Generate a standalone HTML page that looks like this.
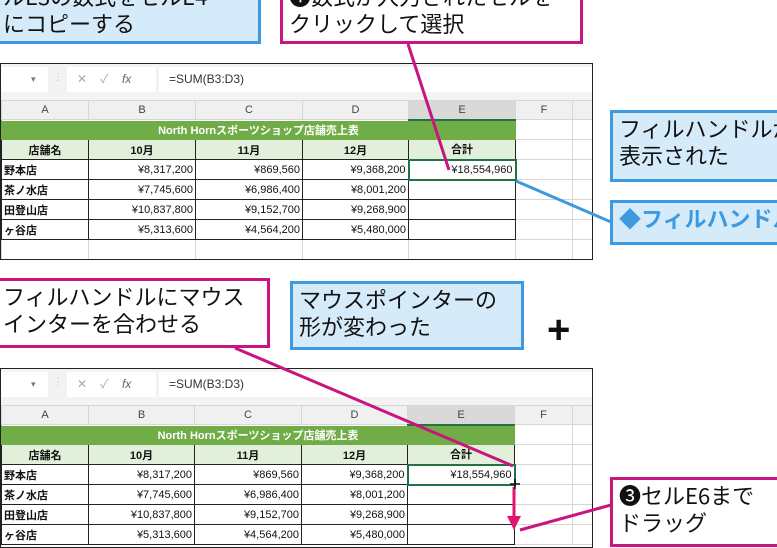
<!DOCTYPE html>
<html><head><meta charset="utf-8"><style>
*{margin:0;padding:0;box-sizing:border-box}
body{width:777px;height:534px;background:#fff;position:relative;overflow:hidden;font-family:"Liberation Sans","Noto Sans CJK JP",sans-serif}
.cb{position:absolute;border:3px solid #3d9ae0;background:#d6ebfa;font-size:22px;line-height:27px;color:#111;padding:2px 6px;white-space:nowrap;overflow:hidden;font-family:"Noto Sans CJK JP",sans-serif}
.cm{position:absolute;border:3px solid #c8157f;background:#fff;font-size:22px;line-height:27px;color:#111;padding:2px 6px;white-space:nowrap;overflow:hidden;font-family:"Noto Sans CJK JP",sans-serif}
.xl{position:absolute;left:0;width:593px;border:1px solid #222;background:#fff;overflow:hidden}
.fb{height:36px;background:#f3f3f3;position:relative}
.fb .nb{position:absolute;left:0;top:3px;width:47px;height:25px;background:#fff}
.fb .ib{position:absolute;left:66px;top:3px;width:89px;height:25px;background:#fff;color:#aaa;font-size:12px;line-height:25px}
.fb .fx{position:absolute;left:158px;top:3px;right:0;height:25px;background:#fff;font-size:12px;line-height:25px;padding-left:10px;color:#333}
table{border-collapse:collapse;table-layout:fixed;width:601px;font-size:11px;font-family:"Liberation Sans","Noto Sans CJK JP",sans-serif}
td{height:20px;border:1px solid #d6d6d6;padding:0 2px;white-space:nowrap;overflow:hidden;color:#111}
tr.h td{background:#f0f0f0;text-align:center;color:#444;font-size:11px;height:19px}
tr.h td.e{background:#d9d9d9;border-bottom:2px solid #217346}
tr.t td.g{background:#70ad47;color:#fff;font-weight:bold;text-align:center;border:1px solid #70ad47}
tr.k td.g{background:#e2efda;font-weight:bold;text-align:center;border:1px solid #222}
td.b{border:1px solid #222;text-align:right}
td.a{border:1px solid #222;text-align:left;font-weight:bold}
td.sel{border:2px solid #217346}
</style></head><body>

<div class="cb" style="left:-6px;top:-22px;width:267px;height:66px">ルE3の数式をセルE4<br>にコピーする</div>
<div class="cm" style="left:280px;top:-22px;width:303px;height:66px">❶数式が入力されたセルを<br>クリックして選択</div>

<div class="xl" style="top:63px;height:197px">
<div class="fb"><div class="nb"><span style="position:absolute;left:30px;top:0;font-size:9px;color:#777;line-height:25px">▾</span></div><div style="position:absolute;left:52px;top:8px;color:#bbb;font-size:10px">⋮</div><div class="ib">&nbsp;&nbsp;&nbsp;✕&nbsp;&nbsp;&nbsp;&nbsp;✓&nbsp;&nbsp;&nbsp;&nbsp;<i style="color:#666">fx</i></div><div class="fx">=SUM(B3:D3)</div></div>
<table>
<colgroup><col style="width:87px"><col style="width:107px"><col style="width:107px"><col style="width:106px"><col style="width:107px"><col style="width:57px"><col style="width:30px"></colgroup>
<tr class="h"><td>A</td><td>B</td><td>C</td><td>D</td><td class="e">E</td><td>F</td><td></td></tr>
<tr class="t"><td class="g" colspan="5">North Hornスポーツショップ店舗売上表</td><td></td><td></td></tr>
<tr class="k"><td class="g">店舗名</td><td class="g">10月</td><td class="g">11月</td><td class="g">12月</td><td class="g">合計</td><td></td><td></td></tr>
<tr><td class="a">野本店</td><td class="b">¥8,317,200</td><td class="b">¥869,560</td><td class="b">¥9,368,200</td><td class="b sel">¥18,554,960</td><td></td><td></td></tr>
<tr><td class="a">茶ノ水店</td><td class="b">¥7,745,600</td><td class="b">¥6,986,400</td><td class="b">¥8,001,200</td><td class="b"></td><td></td><td></td></tr>
<tr><td class="a">田登山店</td><td class="b">¥10,837,800</td><td class="b">¥9,152,700</td><td class="b">¥9,268,900</td><td class="b"></td><td></td><td></td></tr>
<tr><td class="a">ヶ谷店</td><td class="b">¥5,313,600</td><td class="b">¥4,564,200</td><td class="b">¥5,480,000</td><td class="b"></td><td></td><td></td></tr>
<tr><td></td><td></td><td></td><td></td><td></td><td></td><td></td></tr>
</table>
</div>

<div class="cb" style="left:610px;top:110px;width:180px;height:72px">フィルハンドルが<br>表示された</div>
<div class="cb" style="left:610px;top:200px;width:180px;height:45px;color:#3d9ae0;font-weight:bold">◆フィルハンドル</div>

<div class="cm" style="left:-6px;top:278px;width:276px;height:70px">フィルハンドルにマウス<br>インターを合わせる</div>
<div class="cb" style="left:290px;top:281px;width:234px;height:69px">マウスポインターの<br>形が変わった</div>
<div style="position:absolute;left:547px;top:310px;font-size:40px;font-weight:bold;line-height:40px;color:#111">+</div>

<div class="xl" style="top:368px;height:180px">
<div class="fb"><div class="nb"><span style="position:absolute;left:30px;top:0;font-size:9px;color:#777;line-height:25px">▾</span></div><div style="position:absolute;left:52px;top:8px;color:#bbb;font-size:10px">⋮</div><div class="ib">&nbsp;&nbsp;&nbsp;✕&nbsp;&nbsp;&nbsp;&nbsp;✓&nbsp;&nbsp;&nbsp;&nbsp;<i style="color:#666">fx</i></div><div class="fx">=SUM(B3:D3)</div></div>
<table>
<colgroup><col style="width:87px"><col style="width:106px"><col style="width:107px"><col style="width:106px"><col style="width:107px"><col style="width:58px"><col style="width:30px"></colgroup>
<tr class="h"><td>A</td><td>B</td><td>C</td><td>D</td><td class="e">E</td><td>F</td><td></td></tr>
<tr class="t"><td class="g" colspan="5">North Hornスポーツショップ店舗売上表</td><td></td><td></td></tr>
<tr class="k"><td class="g">店舗名</td><td class="g">10月</td><td class="g">11月</td><td class="g">12月</td><td class="g">合計</td><td></td><td></td></tr>
<tr><td class="a">野本店</td><td class="b">¥8,317,200</td><td class="b">¥869,560</td><td class="b">¥9,368,200</td><td class="b sel">¥18,554,960</td><td></td><td></td></tr>
<tr><td class="a">茶ノ水店</td><td class="b">¥7,745,600</td><td class="b">¥6,986,400</td><td class="b">¥8,001,200</td><td class="b"></td><td></td><td></td></tr>
<tr><td class="a">田登山店</td><td class="b">¥10,837,800</td><td class="b">¥9,152,700</td><td class="b">¥9,268,900</td><td class="b"></td><td></td><td></td></tr>
<tr><td class="a">ヶ谷店</td><td class="b">¥5,313,600</td><td class="b">¥4,564,200</td><td class="b">¥5,480,000</td><td class="b"></td><td></td><td></td></tr>
</table>
</div>

<div class="cm" style="left:610px;top:477px;width:180px;height:70px">❸セルE6まで<br>ドラッグ</div>

<svg style="position:absolute;left:0;top:0" width="777" height="534">
<line x1="408" y1="44" x2="449" y2="170" stroke="#c8157f" stroke-width="3"/>
<line x1="516" y1="181" x2="611" y2="222" stroke="#3d9ae0" stroke-width="3"/>
<line x1="235" y1="348" x2="513" y2="466" stroke="#c8157f" stroke-width="3"/>
<line x1="514" y1="487" x2="514" y2="520" stroke="#e0156f" stroke-width="3"/>
<polygon points="507,516 521,516 514,530" fill="#e0156f"/>
<line x1="520" y1="530" x2="611" y2="505" stroke="#c8157f" stroke-width="3"/>
<path d="M515 479v10M510 484h10" stroke="#111" stroke-width="1.5"/>
</svg>
</body></html>
